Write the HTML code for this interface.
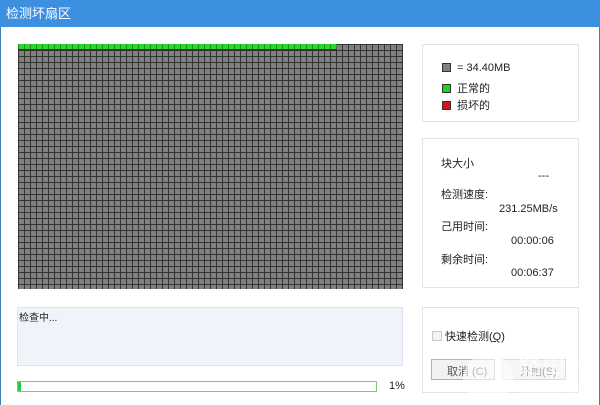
<!DOCTYPE html>
<html><head><meta charset="utf-8"><style>
*{margin:0;padding:0;box-sizing:border-box}
body{width:600px;height:405px;background:#fff;font-family:"Liberation Sans","Noto Sans CJK SC",sans-serif;font-size:11px;color:#222;position:relative;overflow:hidden}
.title{position:absolute;left:0;top:0;width:600px;height:27px;background:#3d8fe0;color:#fff;font-size:13px;line-height:27px;padding-left:6px}
.lb{position:absolute;left:0;top:27px;width:1px;height:378px;background:#3d7fc0}
.rb{position:absolute;right:0;top:27px;width:1px;height:378px;background:#3d7fc0}
.cells{position:absolute;left:18px;top:44px;width:385px;height:245px;
background-image:linear-gradient(to right,#333 1px,transparent 1px),linear-gradient(to bottom,#333 1px,transparent 1px);
background-size:6px 6px;background-color:#808080}
.green{position:absolute;left:18px;top:44px;width:319px;height:6px;background:#22dd22;
background-image:linear-gradient(to right,#2a8a2a 1px,transparent 1px);background-size:6px 6px;border-bottom:1px solid #333}
.box{position:absolute;border:1px solid #e4e4e4;background:#fff}
.sq{display:inline-block;width:9px;height:9px;border:1px solid #333;vertical-align:-1px;margin-right:6px}
.t{position:absolute;white-space:nowrap}
</style></head><body>
<div class="title">检测坏扇区</div>
<div class="lb"></div><div class="rb"></div>
<div class="cells"></div>
<div class="green"></div>
<div class="box" style="left:422px;top:44px;width:157px;height:78px"></div>
<div class="t" style="left:442px;top:62px"><span class="sq" style="background:#808080"></span>= 34.40MB</div>
<div class="t" style="left:442px;top:80px"><span class="sq" style="background:#1ed41e"></span>正常的</div>
<div class="t" style="left:442px;top:97px"><span class="sq" style="background:#e01010"></span>损坏的</div>
<div class="box" style="left:422px;top:138px;width:157px;height:150px"></div>
<div class="t" style="left:441px;top:155px">块大小</div>
<div class="t" style="left:538px;top:170px">---</div>
<div class="t" style="left:441px;top:186px">检测速度:</div>
<div class="t" style="left:499px;top:203px">231.25MB/s</div>
<div class="t" style="left:441px;top:218px">己用时间:</div>
<div class="t" style="left:511px;top:235px">00:00:06</div>
<div class="t" style="left:441px;top:251px">剩余时间:</div>
<div class="t" style="left:511px;top:267px">00:06:37</div>
<div class="box" style="left:17px;top:307px;width:386px;height:59px;background:#f0f4fa;border-color:#dde3ec"></div>
<div class="t" style="left:19px;top:309px;font-size:10px">检查中...</div>
<div style="position:absolute;left:17px;top:381px;width:360px;height:11px;border:1px solid #6bd27b;background:#fff"><div style="width:3px;height:9px;background:#22cc44"></div></div>
<div class="t" style="left:389px;top:380px">1%</div>
<div class="box" style="left:422px;top:307px;width:157px;height:86px"></div>
<div class="t" style="left:432px;top:328px"><span class="sq" style="border-color:#ccc;background:#f4f4f4;width:10px;height:10px;margin-right:3px"></span>快速检测(<u>Q</u>)</div>
<div class="box" style="left:431px;top:359px;width:64px;height:21px;border-color:#aab4c4;background:#f2f2f2"></div>
<div class="t" style="left:447px;top:363px;color:#555">取消 (C)</div>
<div class="box" style="left:502px;top:359px;width:64px;height:21px;border-color:#ddd;background:#f6f6f6"></div>
<div class="t" style="left:520px;top:363px;color:#aaa">开始(S)</div>
<div style="position:absolute;left:463px;top:354px;width:50px;height:50px;border-radius:50%;background:rgba(255,255,255,.6)"></div>
<div style="position:absolute;left:518px;top:352px;font-size:24px;line-height:28px;color:rgba(255,255,255,.8)">路由器</div>
<div style="position:absolute;left:520px;top:384px;font-size:12px;color:rgba(255,255,255,.8)">luyouqi.com</div>
</body></html>
